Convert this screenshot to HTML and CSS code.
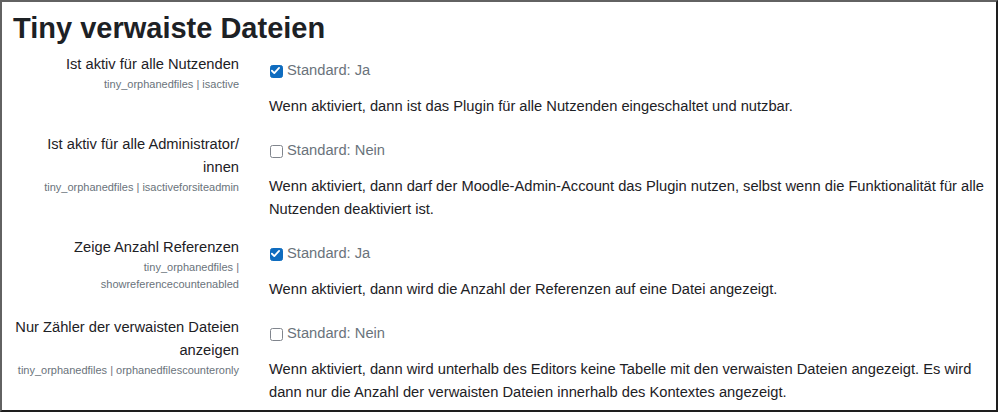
FILE: index.html
```html
<!DOCTYPE html>
<html lang="de">
<head>
    <meta charset="UTF-8">
    <meta name="viewport" content="width=device-width, initial-scale=1.0">
    <title>Tiny verwaiste Dateien</title>
    <link rel="stylesheet" href="styles.css">
</head>
<body>
    <div class="frame">
        <h2 class="page-title">Tiny verwaiste Dateien</h2>

        <div class="setting">
            <div class="setting-label">
                <label>Ist aktiv für alle Nutzenden</label>
                <span class="shortname">tiny_orphanedfiles | isactive</span>
            </div>
            <div class="setting-body">
                <div class="default-line">
                    <span class="check checked">
                        <svg viewBox="0 0 16 16" width="13" height="13"><path d="M3.6 8.3l2.9 2.9 5.9-6.3" fill="none" stroke="#fff" stroke-width="2.2" stroke-linecap="round" stroke-linejoin="round"/></svg>
                    </span>
                    <span class="default-info">Standard: Ja</span>
                </div>
                <div class="description">
                    <p>Wenn aktiviert, dann ist das Plugin für alle Nutzenden eingeschaltet und nutzbar.</p>
                </div>
            </div>
        </div>

        <div class="setting">
            <div class="setting-label">
                <label>Ist aktiv für alle Administrator/ innen</label>
                <span class="shortname">tiny_orphanedfiles | isactiveforsiteadmin</span>
            </div>
            <div class="setting-body">
                <div class="default-line">
                    <span class="check"></span>
                    <span class="default-info">Standard: Nein</span>
                </div>
                <div class="description">
                    <p>Wenn aktiviert, dann darf der Moodle-Admin-Account das Plugin nutzen, selbst wenn die Funktionalität für alle Nutzenden deaktiviert ist.</p>
                </div>
            </div>
        </div>

        <div class="setting">
            <div class="setting-label">
                <label>Zeige Anzahl Referenzen</label>
                <span class="shortname">tiny_orphanedfiles | showreferencecountenabled</span>
            </div>
            <div class="setting-body">
                <div class="default-line">
                    <span class="check checked">
                        <svg viewBox="0 0 16 16" width="13" height="13"><path d="M3.6 8.3l2.9 2.9 5.9-6.3" fill="none" stroke="#fff" stroke-width="2.2" stroke-linecap="round" stroke-linejoin="round"/></svg>
                    </span>
                    <span class="default-info">Standard: Ja</span>
                </div>
                <div class="description">
                    <p>Wenn aktiviert, dann wird die Anzahl der Referenzen auf eine Datei angezeigt.</p>
                </div>
            </div>
        </div>

        <div class="setting">
            <div class="setting-label">
                <label>Nur Zähler der verwaisten Dateien anzeigen</label>
                <span class="shortname">tiny_orphanedfiles | orphanedfilescounteronly</span>
            </div>
            <div class="setting-body">
                <div class="default-line">
                    <span class="check"></span>
                    <span class="default-info">Standard: Nein</span>
                </div>
                <div class="description">
                    <p>Wenn aktiviert, dann wird unterhalb des Editors keine Tabelle mit den verwaisten Dateien angezeigt. Es wird dann nur die Anzahl der verwaisten Dateien innerhalb des Kontextes angezeigt.</p>
                </div>
            </div>
        </div>
    </div>
</body>
</html>
```

FILE: styles.css
```css
* {
    margin: 0;
    padding: 0;
    box-sizing: border-box;
}

body {
    font-family: "Liberation Sans", Arial, sans-serif;
    font-size: 14.7px;
    line-height: 23px;
    color: #1d2125;
    background: #fff;
}

.frame {
    width: 998px;
    height: 412px;
    overflow: hidden;
    padding: 8.6px 0 0 11px;
    border-style: solid;
    border-width: 2px;
    border-color: #626262 #1e1e1e #1e1e1e #626262;
}

.page-title {
    font-size: 29px;
    font-weight: 700;
    line-height: 1.2;
    margin-bottom: 8px;
}

.setting {
    display: grid;
    grid-template-columns: 226px 730px;
    column-gap: 30px;
    margin-bottom: 15px;
}

.setting-label {
    text-align: right;
}

.setting-label label {
    display: block;
}

.shortname {
    display: block;
    font-size: 11px;
    line-height: 17px;
    color: #6a737b;
}

.setting-body {
    padding-top: 6px;
}

.default-line {
    display: flex;
    align-items: center;
}

.check {
    width: 13px;
    height: 13px;
    margin: 1px 4.5px 0 0.5px;
    border: 1.5px solid #80858d;
    border-radius: 2.5px;
    background: #fff;
    display: flex;
}

.check.checked {
    background: #0f6cbf;
    border-color: #0f6cbf;
}

.check svg {
    margin: -1.5px;
}

.default-info {
    color: #6a737b;
}

.description {
    margin-top: 13px;
}
```
